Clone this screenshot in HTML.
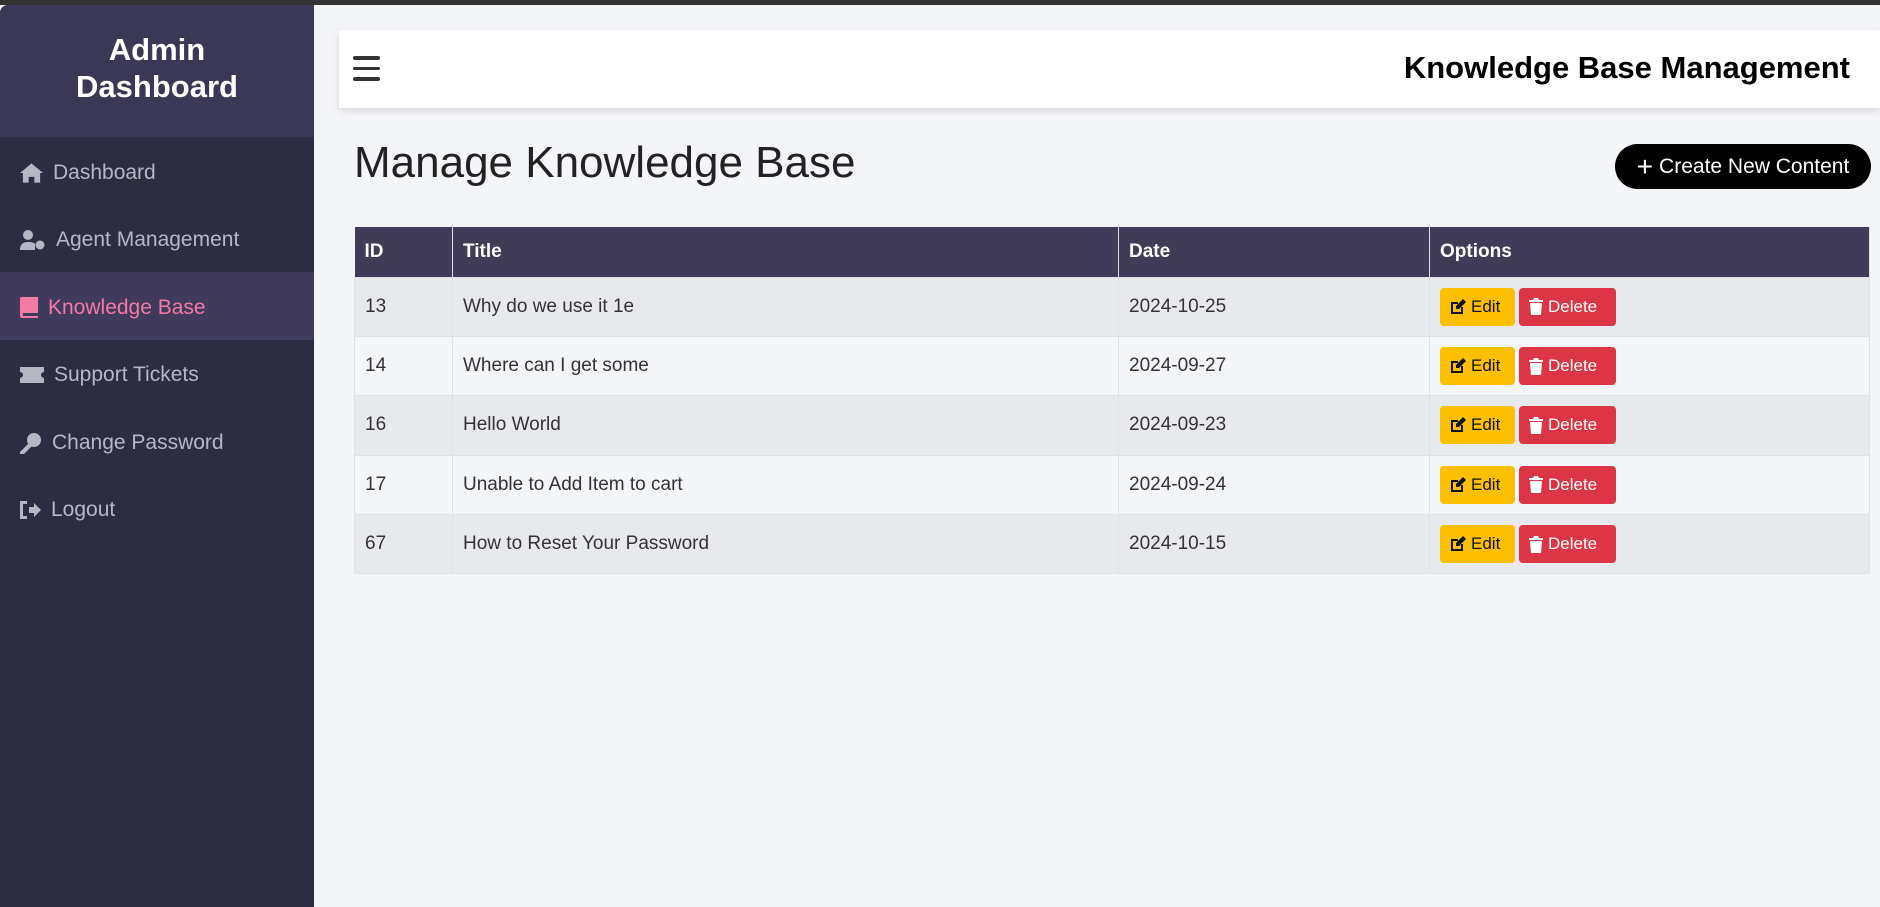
<!DOCTYPE html>
<html><head><style>
*{box-sizing:border-box;margin:0;padding:0}
body{width:1880px;height:907px;overflow:hidden;background:#f4f5f9;font-family:"Liberation Sans",sans-serif;position:relative}
.topstrip{position:absolute;left:0;top:0;width:1880px;height:5px;background:#333}
.side{position:absolute;left:0;top:5px;width:314px;height:902px;background:#2d2d41;border-top-left-radius:8px;overflow:hidden}
.brand{height:132px;background:#3a3856;color:#fff;font-size:31px;font-weight:bold;text-align:center;padding-top:26px;line-height:37px}
.item{height:67.5px;display:flex;align-items:center;padding-left:20px;color:#b4b8c4;font-size:21px;padding-top:4px}
.item svg{margin-right:10px;fill:#b4b8c4}
.item.active{background:#403a5b;color:#f47aa6}
.item.active svg{fill:#f47aa6}
.topbar{position:absolute;left:339px;top:30px;width:1541px;height:78px;background:#fff;box-shadow:0 3px 8px rgba(0,0,0,.12)}
.ham{position:absolute;left:14px;top:26px}
.ham div{width:27px;height:3.5px;background:#333;border-radius:2px;margin-bottom:7px}
.tt{position:absolute;right:30px;top:20px;font-size:31px;font-weight:bold;color:#000;letter-spacing:0px}
h1{position:absolute;left:354px;top:138px;font-weight:normal;font-size:44px;color:#222}
.cbtn{position:absolute;left:1615px;top:144px;width:256px;height:45px;border-radius:23px;background:#000;color:#fff;font-size:21px;display:flex;align-items:center;justify-content:center}
table{position:absolute;left:354px;top:227px;width:1516px;border-collapse:collapse}
th{background:#413b5a;color:#fff;text-align:left;font-size:19px;height:50px;padding-left:10px;border-right:1px solid #ddd}
td{height:59.4px;font-size:19px;color:#333;padding-left:10px;border:1px solid #e0e1e5}
tbody tr:nth-child(odd) td{background:#e8e9ec}
tbody tr:nth-child(even) td{background:#f4f5f9}
.b{display:inline-flex;align-items:center;height:38px;border-radius:4px;font-size:17px;padding:0 10px;margin-right:4px;vertical-align:middle}
.b svg{margin-right:5px}
.e{background:#fcc000;color:#111;width:75px}
.d{background:#dc3545;color:#fff;width:97px}
</style></head><body>
<div class="topstrip"></div>
<div class="side">
<div class="brand">Admin<br>Dashboard</div>
<div class="item"><svg width="23" height="20" viewBox="0 0 24 20"><path d="M12 0L0 10h3v10h6v-6h6v6h6V10h3z"/></svg>Dashboard</div>
<div class="item"><svg width="26" height="20" viewBox="0 0 26 20"><circle cx="8" cy="5" r="5"/><path d="M0 20c0-6 3-8 8-8s6 1 7 2v6z"/><circle cx="20" cy="15" r="4.5"/></svg>Agent Management</div>
<div class="item active"><svg width="18" height="21" viewBox="0 0 18 21"><path d="M0 2a2 2 0 012-2h16v16H3v3h15v2H2a2 2 0 01-2-2z"/></svg>Knowledge Base</div>
<div class="item"><svg width="24" height="16" viewBox="0 0 24 16"><path d="M0 0h24v5a3 3 0 000 6v5H0v-5a3 3 0 000-6z"/></svg>Support Tickets</div>
<div class="item"><svg width="22" height="22" viewBox="0 0 22 22"><circle cx="14" cy="8" r="7"/><path d="M9 11L0 20v2h4l9-9z"/></svg>Change Password</div>
<div class="item"><svg width="21" height="18" viewBox="0 0 21 18"><path d="M0 0h7v3H3v12h4v3H0z"/><path d="M9 6h5V2l7 7-7 7v-4H9z"/></svg>Logout</div>
</div>
<div class="topbar"><div class="ham"><div></div><div></div><div></div></div><div class="tt">Knowledge Base Management</div></div>
<h1>Manage Knowledge Base</h1>
<div class="cbtn"><span style="font-size:28px;margin-right:6px;line-height:1">+</span>Create New Content</div>
<table>
<thead><tr><th style="width:98px">ID</th><th style="width:666px">Title</th><th style="width:311px">Date</th><th>Options</th></tr></thead>
<tbody>
<tr><td>13</td><td>Why do we use it 1e</td><td>2024-10-25</td><td><span class="b e"><svg width="16" height="16" viewBox="0 0 16 16"><path d="M1 3h7v2H3v8h8V8h2v7H1z" fill="#111"/><path d="M13 0l3 3-7 7H6V7z" fill="#111"/></svg>Edit</span><span class="b d"><svg width="14" height="17" viewBox="0 0 14 17"><path d="M0 2h4l1-2h4l1 2h4v2H0zM1 5h12l-1 12H2z" fill="#fff"/></svg>Delete</span></td></tr>
<tr><td>14</td><td>Where can I get some</td><td>2024-09-27</td><td><span class="b e"><svg width="16" height="16" viewBox="0 0 16 16"><path d="M1 3h7v2H3v8h8V8h2v7H1z" fill="#111"/><path d="M13 0l3 3-7 7H6V7z" fill="#111"/></svg>Edit</span><span class="b d"><svg width="14" height="17" viewBox="0 0 14 17"><path d="M0 2h4l1-2h4l1 2h4v2H0zM1 5h12l-1 12H2z" fill="#fff"/></svg>Delete</span></td></tr>
<tr><td>16</td><td>Hello World</td><td>2024-09-23</td><td><span class="b e"><svg width="16" height="16" viewBox="0 0 16 16"><path d="M1 3h7v2H3v8h8V8h2v7H1z" fill="#111"/><path d="M13 0l3 3-7 7H6V7z" fill="#111"/></svg>Edit</span><span class="b d"><svg width="14" height="17" viewBox="0 0 14 17"><path d="M0 2h4l1-2h4l1 2h4v2H0zM1 5h12l-1 12H2z" fill="#fff"/></svg>Delete</span></td></tr>
<tr><td>17</td><td>Unable to Add Item to cart</td><td>2024-09-24</td><td><span class="b e"><svg width="16" height="16" viewBox="0 0 16 16"><path d="M1 3h7v2H3v8h8V8h2v7H1z" fill="#111"/><path d="M13 0l3 3-7 7H6V7z" fill="#111"/></svg>Edit</span><span class="b d"><svg width="14" height="17" viewBox="0 0 14 17"><path d="M0 2h4l1-2h4l1 2h4v2H0zM1 5h12l-1 12H2z" fill="#fff"/></svg>Delete</span></td></tr>
<tr><td>67</td><td>How to Reset Your Password</td><td>2024-10-15</td><td><span class="b e"><svg width="16" height="16" viewBox="0 0 16 16"><path d="M1 3h7v2H3v8h8V8h2v7H1z" fill="#111"/><path d="M13 0l3 3-7 7H6V7z" fill="#111"/></svg>Edit</span><span class="b d"><svg width="14" height="17" viewBox="0 0 14 17"><path d="M0 2h4l1-2h4l1 2h4v2H0zM1 5h12l-1 12H2z" fill="#fff"/></svg>Delete</span></td></tr>
</tbody>
</table>
</body></html>
